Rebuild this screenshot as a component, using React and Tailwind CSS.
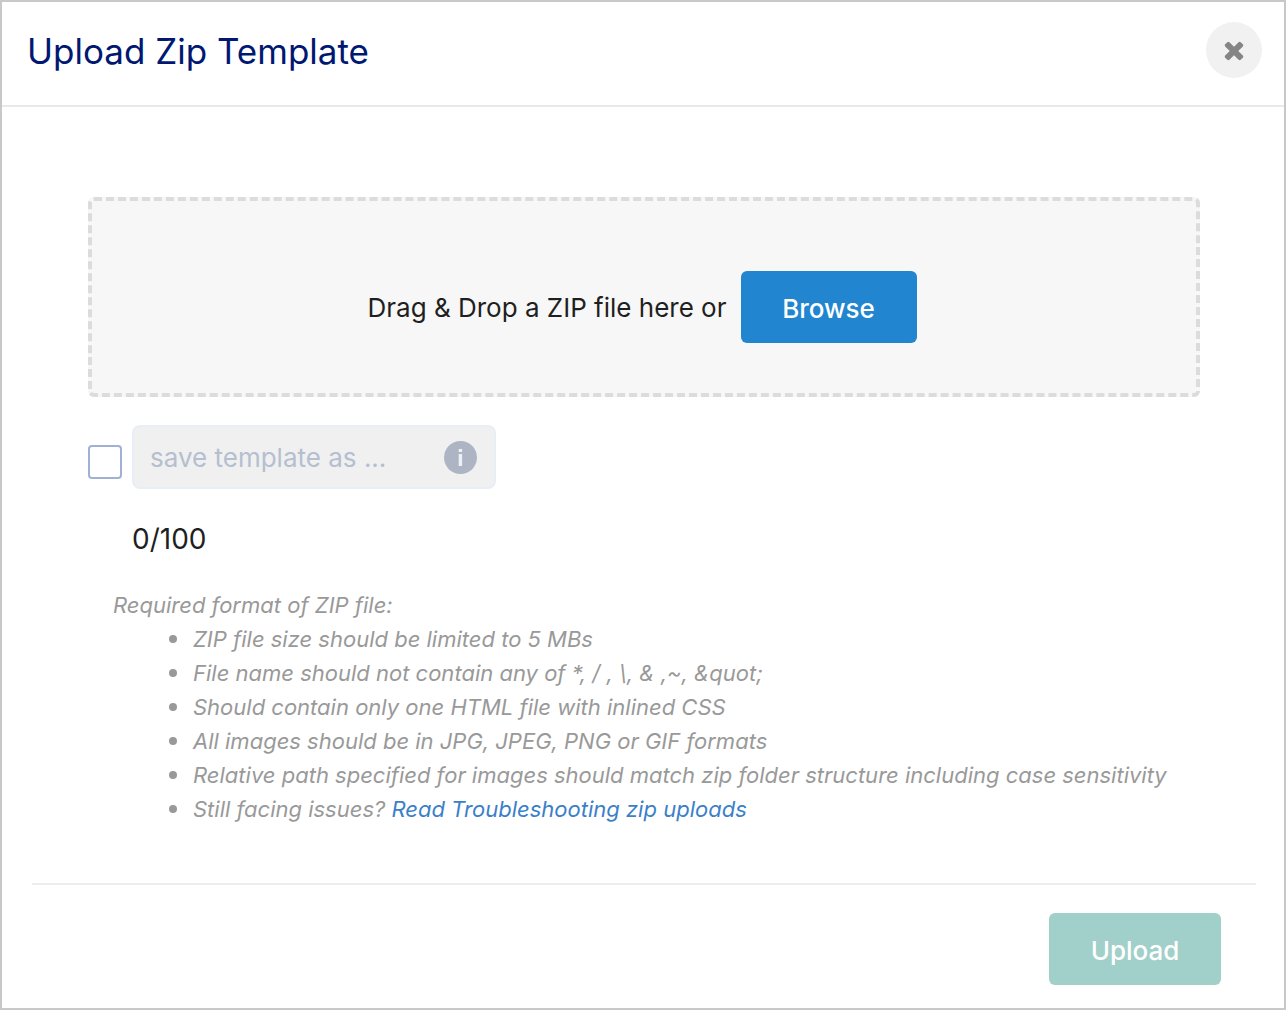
import React, { useState } from 'react';

const MAX_NAME_LENGTH = 100;

const REQUIREMENTS = [
  'ZIP file size should be limited to 5 MBs',
  'File name should not contain any of *, / , \\, & ,~, &quot;',
  'Should contain only one HTML file with inlined CSS',
  'All images should be in JPG, JPEG, PNG or GIF formats',
  'Relative path specified for images should match zip folder structure including case sensitivity',
];

function CloseIcon() {
  return (
    <svg viewBox="0 0 1792 1792" className="h-7 w-7 fill-[#858585]" aria-hidden="true">
      <path d="M1490 1322q0 40-28 68l-136 136q-28 28-68 28t-68-28l-294-294-294 294q-28 28-68 28t-68-28l-136-136q-28-28-28-68t28-68l294-294-294-294q-28-28-28-68t28-68l136-136q28-28 68-28t68 28l294 294 294-294q28-28 68-28t68 28l136 136q28 28 28 68t-28 68l-294 294 294 294q28 28 28 68z" />
    </svg>
  );
}

function InfoIcon() {
  return (
    <svg viewBox="0 0 33 33" className="h-[33px] w-[33px]" aria-hidden="true">
      <circle cx="16.5" cy="16.5" r="16.5" fill="#adb5c4" />
      <rect x="14.7" y="8" width="3.4" height="3" fill="#f0f0f0" />
      <rect x="14.7" y="13" width="3.4" height="12" fill="#f0f0f0" />
    </svg>
  );
}

function Requirement({ children }) {
  return (
    <li className="flex gap-4">
      <span className="mt-[13px] h-2 w-2 shrink-0 rounded-full bg-[#999]" />
      <span>{children}</span>
    </li>
  );
}

export default function App() {
  const [saveTemplate, setSaveTemplate] = useState(false);
  const [name, setName] = useState('');

  return (
    <div
      role="dialog"
      aria-labelledby="dialog-title"
      className="min-h-screen border-2 border-[#c8c8c8] bg-white font-['Inter',sans-serif] text-[#1f1f1f]"
    >
      {/* Header */}
      <header className="flex items-start justify-between border-b-2 border-[#e9e9e9] pt-5 pr-[22px] pb-[25px] pl-[25px]">
        <h1 id="dialog-title" className="text-[35px] leading-[58px] text-[#001871]">Upload Zip Template</h1>
        <button
          type="button"
          aria-label="Close"
          className="flex h-14 w-14 items-center justify-center rounded-full bg-[#f1f1f1]"
        >
          <CloseIcon />
        </button>
      </header>

      {/* Body */}
      <main className="pt-[90px] pr-[84px] pb-[57px] pl-[86px]">
        <div className="flex items-center justify-center gap-3.5 rounded-md border-4 border-dashed border-[#dcdcdc] bg-[#f7f7f7] pt-[70px] pr-1 pb-[50px]">
          <span className="pt-0.5 text-[26px] leading-10">Drag &amp; Drop a ZIP file here or</span>
          <button type="button" className="h-[72px] w-44 rounded-md bg-[#2185d0] pt-0.5 text-[26px] font-medium text-white">
            Browse
          </button>
        </div>

        <div className="flex items-start gap-2.5 pt-7">
          <input
            type="checkbox"
            aria-label="Save template"
            checked={saveTemplate}
            onChange={(e) => setSaveTemplate(e.target.checked)}
            className="mt-5 h-[34px] w-[34px] appearance-none rounded-sm border-2 border-[#9fb2d6] bg-white checked:bg-[#2185d0]"
          />
          <div>
            <div className="flex h-16 w-[364px] items-center rounded-lg border-2 border-[#e9eef6] bg-[#f0f0f0] pr-[17px] pl-4">
              <input
                type="text"
                aria-label="Template name"
                placeholder="save template as ..."
                maxLength={MAX_NAME_LENGTH}
                disabled={!saveTemplate}
                value={name}
                onChange={(e) => setName(e.target.value)}
                className="min-w-0 flex-1 bg-transparent pt-0.5 text-[26px] leading-10 placeholder:text-[#b5bfcf]"
              />
              <InfoIcon />
            </div>
            <p className="pt-[30px] text-[28px] leading-10">
              {name.length}/{MAX_NAME_LENGTH}
            </p>
          </div>
        </div>

        <div className="pt-[29px] pl-[25px] text-[22px] leading-[34px] text-[#999] italic">
          <p>Required format of ZIP file:</p>
          <ul className="pl-14">
            {REQUIREMENTS.map((item) => (
              <Requirement key={item}>{item}</Requirement>
            ))}
            <Requirement>
              Still facing issues?{' '}
              <a href="#troubleshooting" className="text-[#3b7fc9]">Read Troubleshooting zip uploads</a>
            </Requirement>
          </ul>
        </div>
      </main>

      {/* Footer */}
      <footer className="mr-7 ml-[30px] flex justify-end border-t-2 border-[#ececec] pt-7 pr-[35px] pb-[23px]">
        <button type="button" className="h-[72px] w-[172px] rounded-md bg-[#a1cfc9] pt-0.5 text-[26px] font-medium text-white">
          Upload
        </button>
      </footer>
    </div>
  );
}
